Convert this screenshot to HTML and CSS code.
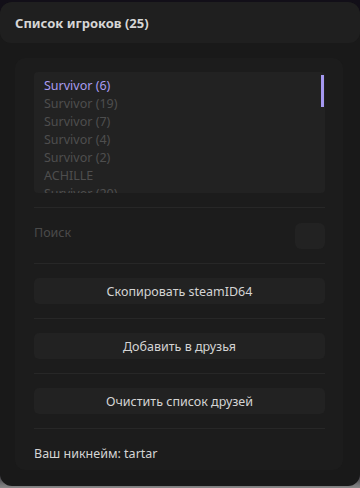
FILE: index.html
```html
<!DOCTYPE html>
<html lang="ru">
<head>
  <meta charset="UTF-8">
  <meta name="viewport" content="width=device-width, initial-scale=1.0">
  <title>Список игроков</title>
  <link rel="stylesheet" href="styles.css">
</head>
<body>
  <div class="window">
    <div class="header">Список игроков (25)</div> <!-- заголовок окна -->
    <div class="panel">
      <div class="listbox"> <!-- список игроков -->
        <div class="item selected">Survivor (6)</div>
        <div class="item">Survivor (19)</div>
        <div class="item">Survivor (7)</div>
        <div class="item">Survivor (4)</div>
        <div class="item">Survivor (2)</div>
        <div class="item">ACHILLE</div>
        <div class="item">Survivor (20)</div>
        <div class="scrollbar"></div>
      </div>
      <div class="sep"></div>
      <div class="search-row">
        <span class="search-label">Поиск</span>
        <div class="search-box"></div>
      </div>
      <div class="sep"></div>
      <button class="btn">Скопировать steamID64</button>
      <div class="sep"></div>
      <button class="btn">Добавить в друзья</button>
      <div class="sep"></div>
      <button class="btn">Очистить список друзей</button>
      <div class="sep"></div>
      <div class="nickname">Ваш никнейм: tartar</div>
    </div>
  </div>
</body>
</html>
```

FILE: styles.css
```css
body {
  margin: 0;
  height: 488px;
  overflow: hidden;
  background: linear-gradient(to bottom, #120f18 0, #120f18 96%, #8a8a8a 100%);
  font-family: 'Noto Sans', 'Open Sans', sans-serif;
}

.window {
  margin-top: 2px;
  height: 484px;
  background-color: #191919;
  border-radius: 12px;
  overflow: hidden;
}

.header {
  height: 41px;
  line-height: 43px;
  padding-left: 15px;
  background-color: #1f1f1f;
  border-radius: 11px;
  color: #d6d6d6;
  font-size: 13px;
  font-weight: bold;
}

.panel {
  margin: 15px 17px 0 15px;
  padding: 14px 18px 5px 19px;
  background-color: #1c1c1c;
  border-radius: 10px;
  display: flex;
  flex-direction: column;
  gap: 14px;
}

.listbox {
  position: relative;
  height: 121px;
  padding: 5px 0 0 10px;
  box-sizing: border-box;
  background-color: #222222;
  border-radius: 4px;
  overflow: hidden;
}

.item {
  height: 18px;
  line-height: 18px;
  font-size: 12.5px;
  color: #4e4e4e;
}

.item.selected {
  color: #a99cf0;
}

.scrollbar {
  position: absolute;
  top: 3px;
  right: 1px;
  width: 3px;
  height: 32px;
  background-color: #a598f0;
}

.sep {
  height: 1px;
  background-color: #272727;
}

.search-row {
  display: flex;
  justify-content: space-between;
  align-items: flex-start;
  height: 26px;
  margin-top: 1px;
}

.search-label {
  line-height: 20px;
  font-size: 12.5px;
  color: #4a4a4a;
}

.search-box {
  width: 30px;
  height: 26px;
  background-color: #222222;
  border-radius: 6px;
}

.btn {
  height: 26px;
  border: none;
  border-radius: 5px;
  background-color: #222222;
  color: #d4d4d4;
  font-family: inherit;
  font-size: 12.5px;
  padding: 0;
}

.nickname {
  line-height: 22px;
  font-size: 12.5px;
  color: #d4d4d4;
}
```
